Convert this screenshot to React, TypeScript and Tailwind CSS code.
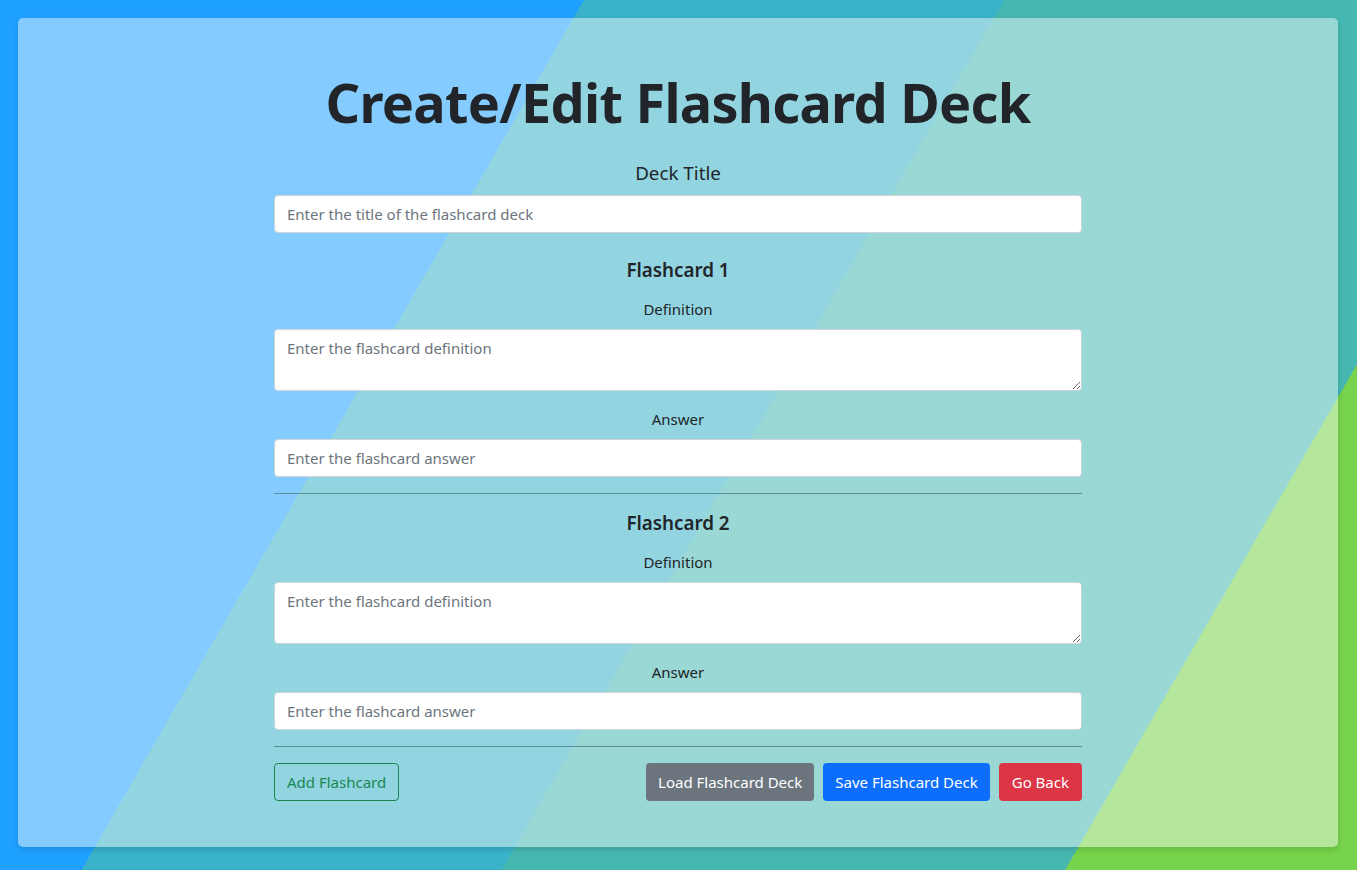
const font = "font-['Noto_Sans',sans-serif]";

const Flashcard = ({ n }: { n: number }) => (
  <div className={n === 1 ? "" : "pt-px"}>
    <h5 className="text-center text-[18.8px] leading-[24px] font-semibold text-[#212529]">Flashcard {n}</h5>
    <label className="block text-center text-[15px] leading-[24px] text-[#212529] mt-[15px] mb-2">Definition</label>
    <textarea
      placeholder="Enter the flashcard definition"
      className="block w-full h-[62px] bg-white border border-[#ced4da] rounded-[4px] px-3 py-[6px] text-[15px] leading-[24px] placeholder:text-[#6c757d]"
    />
    <label className="block text-center text-[15px] leading-[24px] text-[#212529] mt-4 mb-2">Answer</label>
    <input
      placeholder="Enter the flashcard answer"
      className="block w-full h-[38px] bg-white border border-[#ced4da] rounded-[4px] px-3 text-[15px] placeholder:text-[#6c757d]"
    />
    <hr className="border-0 border-t border-[#5f8c9a] my-4" />
  </div>
);

export default function App() {
  return (
    <div
      className={`${font} min-h-[870px] pt-[18px] pb-[18px] pl-[18px] pr-[19px] bg-[linear-gradient(120deg,#1fa2ff_0%,#1fa2ff_31.4%,#3ab2c9_31.4%,#3ab2c9_54%,#46b8b1_54%,#46b8b1_84.3%,#77d34b_84.3%,#77d34b_100%)]`}
    >
      <div className="bg-white/45 rounded-[5px] shadow-[0_2px_6px_rgba(0,0,0,0.15)] pt-[50px] pb-[46px]">
        <div className="w-[808px] mx-auto">
          <h1 className="text-center text-[54px] leading-[68px] tracking-[-0.7px] font-bold text-[#212529]">Create/Edit Flashcard Deck</h1>
          <label className="block text-center text-[18.8px] leading-[30px] text-[#212529] mt-[22px] mb-[7px]">Deck Title</label>
          <input
            placeholder="Enter the title of the flashcard deck"
            className="block w-full h-[38px] bg-white border border-[#ced4da] rounded-[4px] px-3 text-[15px] placeholder:text-[#6c757d]"
          />
          <div className="mt-[25px]">
            <Flashcard n={1} />
            <Flashcard n={2} />
          </div>
          <div className="flex items-center justify-between">
            <button className="h-[38px] px-3 rounded-[4px] border border-[#198754] text-[#198754] text-[15px]">Add Flashcard</button>
            <div className="flex gap-[9px]">
              <button className="h-[38px] px-3 rounded-[4px] bg-[#6c757d] text-white text-[15px]">Load Flashcard Deck</button>
              <button className="h-[38px] px-3 rounded-[4px] bg-[#0d6efd] text-white text-[15px]">Save Flashcard Deck</button>
              <button className="h-[38px] px-[13px] rounded-[4px] bg-[#dc3545] text-white text-[15px]">Go Back</button>
            </div>
          </div>
        </div>
      </div>
    </div>
  );
}
